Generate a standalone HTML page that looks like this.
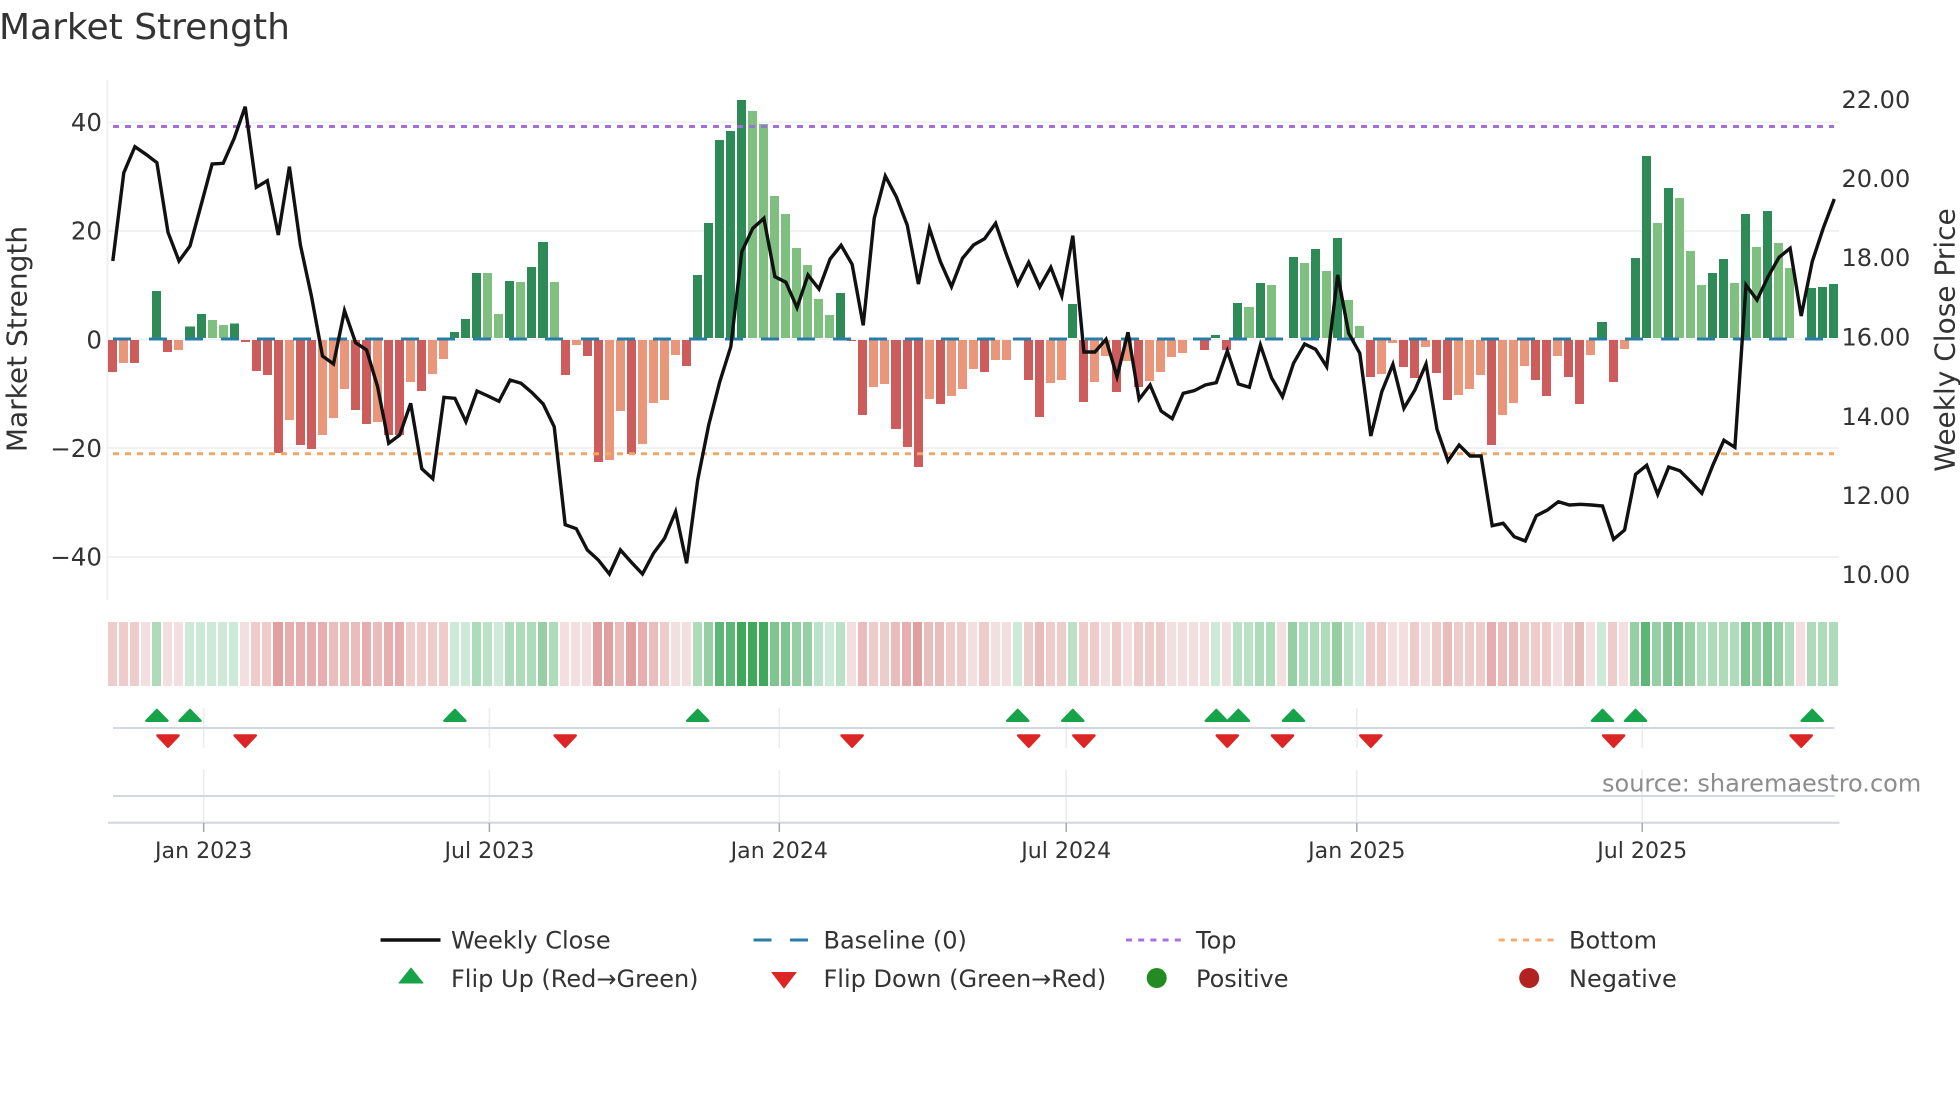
<!DOCTYPE html>
<html lang="en"><head><meta charset="utf-8"><title>Market Strength</title>
<style>
html,body{margin:0;padding:0;background:#fff;width:1960px;height:1102px;overflow:hidden}
svg{position:absolute;left:0;top:0}
text{font-family:"DejaVu Sans","Liberation Sans",sans-serif;fill:#333}
.row{position:absolute;left:107.28px;display:flex;width:1733px}
.row b{display:block;flex:0 0 11.035px;box-sizing:border-box;border-style:solid;border-color:transparent;background-clip:padding-box}
#bars{top:339px;align-items:flex-start}
#bars b{border-width:1px 1.32px 0}
#bars b.a,#bars b.c{border-width:0 1.32px .6px;transform:translateY(-100%)}
.a{background-color:#2e8b57}.c{background-color:#7fbf7f}.d{background-color:#cd5c5c}.e{background-color:#e9967a}
#strip{top:622px;left:107px;height:64px;align-items:stretch}
#strip b{border-width:0 .95px}
.r1{background-color:#f4dfe0}.r2{background-color:#eecccc}.r3{background-color:#eabdbd}.r4{background-color:#e6aeae}.r5{background-color:#e1a0a0}
.g1{background-color:#cde9d7}.g2{background-color:#bbe1c6}.g3{background-color:#aedbb9}.g4{background-color:#97cfa5}.g5{background-color:#7fc592}.g6{background-color:#5eb676}.g7{background-color:#3fa85b}
</style></head><body>
<svg width="1960" height="1102" viewBox="0 0 1960 1102">
<g stroke="#eff1f4" stroke-width="2" fill="none">
<path d="M107.5 80V600"/>
<path d="M108 122.5H1839M108 231H1839M108 339.5H1839M108 448H1839M108 557H1839"/>
</g>
<g stroke="#e9ecf2" stroke-width="1.5" fill="none">
<path d="M203.7 708V748M203.7 770V822M489.4 708V748M489.4 770V822M779.3 708V748M779.3 770V822M1066.2 708V748M1066.2 770V822M1356.8 708V748M1356.8 770V822M1642.2 708V748M1642.2 770V822"/>
</g>
<g stroke="#d2d6dd" stroke-width="2" fill="none">
<path d="M113 728H1834.5M113 796H1834.5M108 822.7H1839.5"/>
</g>
<g stroke="#a3a8b0" stroke-width="1.5" fill="none">
<path d="M203.7 823V832M489.4 823V832M779.3 823V832M1066.2 823V832M1356.8 823V832M1642.2 823V832"/>
</g>
</svg>

<div class="row" id="bars"><b class="d" style="height:33px"></b><b class="e" style="height:24px"></b><b class="d" style="height:24px"></b><b></b><b class="a" style="height:48px"></b><b class="d" style="height:13px"></b><b class="e" style="height:11px"></b><b class="a" style="height:12.5px"></b><b class="a" style="height:25px"></b><b class="c" style="height:19px"></b><b class="c" style="height:14px"></b><b class="a" style="height:15.5px"></b><b class="d" style="height:2.5px"></b><b class="d" style="height:32px"></b><b class="d" style="height:36px"></b><b class="d" style="height:114px"></b><b class="e" style="height:81px"></b><b class="d" style="height:106px"></b><b class="d" style="height:110px"></b><b class="e" style="height:96px"></b><b class="e" style="height:79px"></b><b class="e" style="height:50px"></b><b class="d" style="height:71px"></b><b class="d" style="height:85px"></b><b class="e" style="height:83px"></b><b class="d" style="height:96px"></b><b class="d" style="height:96px"></b><b class="e" style="height:43px"></b><b class="d" style="height:52px"></b><b class="e" style="height:35px"></b><b class="e" style="height:20px"></b><b class="a" style="height:7px"></b><b class="a" style="height:20px"></b><b class="a" style="height:66px"></b><b class="c" style="height:66px"></b><b class="c" style="height:25px"></b><b class="a" style="height:58px"></b><b class="c" style="height:57px"></b><b class="a" style="height:72px"></b><b class="a" style="height:97px"></b><b class="c" style="height:57px"></b><b class="d" style="height:36px"></b><b class="e" style="height:6px"></b><b class="d" style="height:17px"></b><b class="d" style="height:123px"></b><b class="e" style="height:121px"></b><b class="e" style="height:72px"></b><b class="d" style="height:115px"></b><b class="e" style="height:105px"></b><b class="e" style="height:64px"></b><b class="e" style="height:61px"></b><b class="e" style="height:16px"></b><b class="d" style="height:27px"></b><b class="a" style="height:64px"></b><b class="a" style="height:116px"></b><b class="a" style="height:199px"></b><b class="a" style="height:208px"></b><b class="a" style="height:239px"></b><b class="c" style="height:228px"></b><b class="c" style="height:215px"></b><b class="c" style="height:143px"></b><b class="c" style="height:125px"></b><b class="c" style="height:91px"></b><b class="c" style="height:74px"></b><b class="c" style="height:40px"></b><b class="c" style="height:24px"></b><b class="a" style="height:46px"></b><b class="d" style="height:1.5px"></b><b class="d" style="height:76px"></b><b class="e" style="height:48px"></b><b class="e" style="height:45px"></b><b class="d" style="height:90px"></b><b class="d" style="height:108px"></b><b class="d" style="height:128px"></b><b class="e" style="height:60px"></b><b class="d" style="height:65px"></b><b class="e" style="height:57px"></b><b class="e" style="height:50px"></b><b class="e" style="height:30px"></b><b class="d" style="height:33px"></b><b class="e" style="height:21px"></b><b class="e" style="height:21px"></b><b></b><b class="d" style="height:41px"></b><b class="d" style="height:78px"></b><b class="e" style="height:44px"></b><b class="e" style="height:41px"></b><b class="a" style="height:35px"></b><b class="d" style="height:63px"></b><b class="e" style="height:43px"></b><b class="e" style="height:17px"></b><b class="d" style="height:53px"></b><b class="e" style="height:22px"></b><b class="d" style="height:48px"></b><b class="e" style="height:42px"></b><b class="e" style="height:33px"></b><b class="e" style="height:18px"></b><b class="e" style="height:14px"></b><b></b><b class="d" style="height:11px"></b><b class="a" style="height:4px"></b><b class="d" style="height:11px"></b><b class="a" style="height:36px"></b><b class="c" style="height:32px"></b><b class="a" style="height:56px"></b><b class="c" style="height:54px"></b><b></b><b class="a" style="height:82px"></b><b class="c" style="height:76px"></b><b class="a" style="height:90px"></b><b class="c" style="height:68px"></b><b class="a" style="height:101px"></b><b class="c" style="height:39px"></b><b class="c" style="height:13px"></b><b class="d" style="height:38px"></b><b class="e" style="height:35px"></b><b class="e" style="height:4px"></b><b class="d" style="height:28px"></b><b class="d" style="height:39px"></b><b class="e" style="height:8px"></b><b class="d" style="height:34px"></b><b class="d" style="height:61px"></b><b class="e" style="height:56px"></b><b class="e" style="height:50px"></b><b class="e" style="height:36px"></b><b class="d" style="height:106px"></b><b class="e" style="height:76px"></b><b class="e" style="height:64px"></b><b class="e" style="height:27px"></b><b class="d" style="height:41px"></b><b class="d" style="height:57px"></b><b class="e" style="height:17px"></b><b class="d" style="height:38px"></b><b class="d" style="height:65px"></b><b class="e" style="height:16px"></b><b class="a" style="height:17px"></b><b class="d" style="height:43px"></b><b class="e" style="height:10px"></b><b class="a" style="height:81px"></b><b class="a" style="height:183px"></b><b class="c" style="height:116px"></b><b class="a" style="height:151px"></b><b class="c" style="height:141px"></b><b class="c" style="height:88px"></b><b class="c" style="height:54px"></b><b class="a" style="height:66px"></b><b class="a" style="height:80px"></b><b class="c" style="height:56px"></b><b class="a" style="height:125px"></b><b class="c" style="height:92px"></b><b class="a" style="height:128px"></b><b class="c" style="height:96px"></b><b class="c" style="height:71px"></b><b></b><b class="a" style="height:51px"></b><b class="a" style="height:52px"></b><b class="a" style="height:55px"></b></div>

<div class="row" id="strip"><b class="r2"></b><b class="r2"></b><b class="r2"></b><b class="r1"></b><b class="g3"></b><b class="r1"></b><b class="r1"></b><b class="g1"></b><b class="g1"></b><b class="g1"></b><b class="g1"></b><b class="g1"></b><b class="r1"></b><b class="r2"></b><b class="r2"></b><b class="r5"></b><b class="r4"></b><b class="r4"></b><b class="r4"></b><b class="r4"></b><b class="r3"></b><b class="r3"></b><b class="r3"></b><b class="r4"></b><b class="r3"></b><b class="r4"></b><b class="r4"></b><b class="r2"></b><b class="r2"></b><b class="r2"></b><b class="r2"></b><b class="g1"></b><b class="g1"></b><b class="g3"></b><b class="g2"></b><b class="g1"></b><b class="g3"></b><b class="g3"></b><b class="g3"></b><b class="g4"></b><b class="g3"></b><b class="r1"></b><b class="r1"></b><b class="r1"></b><b class="r5"></b><b class="r5"></b><b class="r3"></b><b class="r5"></b><b class="r4"></b><b class="r3"></b><b class="r2"></b><b class="r1"></b><b class="r1"></b><b class="g3"></b><b class="g4"></b><b class="g6"></b><b class="g6"></b><b class="g7"></b><b class="g7"></b><b class="g7"></b><b class="g5"></b><b class="g5"></b><b class="g4"></b><b class="g4"></b><b class="g2"></b><b class="g1"></b><b class="g2"></b><b class="r1"></b><b class="r3"></b><b class="r2"></b><b class="r2"></b><b class="r3"></b><b class="r4"></b><b class="r5"></b><b class="r3"></b><b class="r3"></b><b class="r2"></b><b class="r2"></b><b class="r1"></b><b class="r2"></b><b class="r1"></b><b class="r1"></b><b class="g1"></b><b class="r2"></b><b class="r3"></b><b class="r2"></b><b class="r2"></b><b class="g2"></b><b class="r2"></b><b class="r2"></b><b class="r1"></b><b class="r2"></b><b class="r1"></b><b class="r2"></b><b class="r2"></b><b class="r2"></b><b class="r1"></b><b class="r1"></b><b class="r1"></b><b class="r1"></b><b class="g1"></b><b class="r1"></b><b class="g2"></b><b class="g2"></b><b class="g3"></b><b class="g3"></b><b class="r1"></b><b class="g4"></b><b class="g3"></b><b class="g3"></b><b class="g3"></b><b class="g4"></b><b class="g2"></b><b class="g1"></b><b class="r2"></b><b class="r2"></b><b class="r1"></b><b class="r1"></b><b class="r2"></b><b class="r1"></b><b class="r2"></b><b class="r3"></b><b class="r2"></b><b class="r2"></b><b class="r2"></b><b class="r4"></b><b class="r3"></b><b class="r3"></b><b class="r2"></b><b class="r2"></b><b class="r2"></b><b class="r1"></b><b class="r2"></b><b class="r3"></b><b class="r1"></b><b class="g1"></b><b class="r2"></b><b class="r1"></b><b class="g4"></b><b class="g6"></b><b class="g4"></b><b class="g5"></b><b class="g5"></b><b class="g4"></b><b class="g3"></b><b class="g3"></b><b class="g3"></b><b class="g3"></b><b class="g5"></b><b class="g4"></b><b class="g5"></b><b class="g4"></b><b class="g3"></b><b class="r1"></b><b class="g3"></b><b class="g3"></b><b class="g3"></b></div>

<svg width="1960" height="1102" viewBox="0 0 1960 1102">
<path d="M113 339H1834" stroke="#2a7ca8" stroke-width="3" stroke-dasharray="18 18" fill="none"/>
<path d="M113 126.5H1834" stroke="#a06fd8" stroke-width="3" stroke-dasharray="6 6" fill="none"/>
<path d="M113 453.7H1834" stroke="#f4a765" stroke-width="3" stroke-dasharray="6 6" fill="none"/>
<polyline fill="none" stroke="#111" stroke-width="3.4" stroke-linejoin="miter" points="112.8,261 123.8,172.7 134.9,146.7 145.9,154.3 156.9,162.7 168,232.3 179,261 190,246 201.1,205 212.1,164 223.2,163.3 234.2,138.3 245.2,106.7 256.3,187.3 267.3,180.7 278.3,235 289.4,166.7 300.4,245 311.4,296 322.5,356 333.5,364 344.5,310.7 355.6,342.7 366.6,350 377.6,386.7 388.7,443.3 399.7,435 410.7,403.3 421.8,468.7 432.8,478.7 443.9,397.3 454.9,398.3 465.9,421.7 477,391 488,396 499,401.3 510.1,380 521.1,383.3 532.1,392.7 543.2,404 554.2,426.7 565.2,524.7 576.3,528.7 587.3,550 598.3,560 609.4,574 620.4,550 631.4,562.3 642.5,574 653.5,553.3 664.6,538.3 675.6,511.7 686.6,563.3 697.7,480 708.7,425 719.7,382 730.8,346.7 741.8,251.7 752.8,228.3 763.9,218.3 774.9,276.7 785.9,282.3 797,307.7 808,275 819,289 830.1,259 841.1,245.3 852.1,264.3 863.2,325.3 874.2,218.3 885.3,176 896.3,196.7 907.3,225.3 918.4,284 929.4,228.3 940.4,261.7 951.5,286.7 962.5,258.3 973.5,245 984.6,238.7 995.6,223.3 1006.6,255 1017.7,284.3 1028.7,262.3 1039.7,287 1050.8,267.3 1061.8,296 1072.8,235.7 1083.9,352 1094.9,352 1106,339.3 1117,376.7 1128,332.3 1139.1,399.3 1150.1,385 1161.1,411 1172.2,418.7 1183.2,393.3 1194.2,390.7 1205.3,385 1216.3,382.7 1227.3,351 1238.4,384 1249.4,387.3 1260.4,345 1271.5,377.7 1282.5,396.7 1293.5,363.3 1304.6,344 1315.6,349.3 1326.7,366.7 1337.7,275 1348.7,333.3 1359.8,353.3 1370.8,436 1381.8,391.7 1392.9,364.3 1403.9,408.3 1414.9,390 1426,364 1437,429.3 1448,461 1459.1,445 1470.1,456 1481.1,456 1492.2,525.7 1503.2,523.3 1514.2,536.7 1525.3,541 1536.3,515.7 1547.4,510 1558.4,501.7 1569.4,505 1580.5,504.3 1591.5,505 1602.5,506 1613.6,539.3 1624.6,530 1635.6,474.3 1646.7,465.3 1657.7,494.3 1668.7,467 1679.8,470.7 1690.8,481.7 1701.8,493.3 1712.9,465 1723.9,440.3 1734.9,447.3 1746,285 1757,300 1768.1,276.7 1779.1,257.3 1790.1,248.3 1801.2,316 1812.2,261.7 1823.2,228.3 1834.3,199"/>

<g fill="#16a34a" stroke="#16a34a" stroke-width="2.4" stroke-linejoin="round">
<path transform="translate(156.9 720.8)" d="M-10.6 0L0-10.9 10.6 0z"/>
<path transform="translate(190 720.8)" d="M-10.6 0L0-10.9 10.6 0z"/>
<path transform="translate(454.9 720.8)" d="M-10.6 0L0-10.9 10.6 0z"/>
<path transform="translate(697.7 720.8)" d="M-10.6 0L0-10.9 10.6 0z"/>
<path transform="translate(1017.7 720.8)" d="M-10.6 0L0-10.9 10.6 0z"/>
<path transform="translate(1072.8 720.8)" d="M-10.6 0L0-10.9 10.6 0z"/>
<path transform="translate(1216.3 720.8)" d="M-10.6 0L0-10.9 10.6 0z"/>
<path transform="translate(1238.4 720.8)" d="M-10.6 0L0-10.9 10.6 0z"/>
<path transform="translate(1293.5 720.8)" d="M-10.6 0L0-10.9 10.6 0z"/>
<path transform="translate(1602.5 720.8)" d="M-10.6 0L0-10.9 10.6 0z"/>
<path transform="translate(1635.6 720.8)" d="M-10.6 0L0-10.9 10.6 0z"/>
<path transform="translate(1812.2 720.8)" d="M-10.6 0L0-10.9 10.6 0z"/>
</g>
<g fill="#dc2626" stroke="#dc2626" stroke-width="2.4" stroke-linejoin="round">
<path transform="translate(168 735.5)" d="M-10.6 0L0 11.3 10.6 0z"/>
<path transform="translate(245.2 735.5)" d="M-10.6 0L0 11.3 10.6 0z"/>
<path transform="translate(565.2 735.5)" d="M-10.6 0L0 11.3 10.6 0z"/>
<path transform="translate(852.1 735.5)" d="M-10.6 0L0 11.3 10.6 0z"/>
<path transform="translate(1028.7 735.5)" d="M-10.6 0L0 11.3 10.6 0z"/>
<path transform="translate(1083.9 735.5)" d="M-10.6 0L0 11.3 10.6 0z"/>
<path transform="translate(1227.3 735.5)" d="M-10.6 0L0 11.3 10.6 0z"/>
<path transform="translate(1282.5 735.5)" d="M-10.6 0L0 11.3 10.6 0z"/>
<path transform="translate(1370.8 735.5)" d="M-10.6 0L0 11.3 10.6 0z"/>
<path transform="translate(1613.6 735.5)" d="M-10.6 0L0 11.3 10.6 0z"/>
<path transform="translate(1801.2 735.5)" d="M-10.6 0L0 11.3 10.6 0z"/>
</g>

<text x="-1" y="39" font-size="36">Market Strength</text>

<g font-size="24.5" text-anchor="end">
<text x="102" y="131">40</text>
<text x="102" y="239.5">20</text>
<text x="102" y="348.5">0</text>
<text x="102" y="457">−20</text>
<text x="102" y="565.5">−40</text>
</g>
<g font-size="24">
<text x="1841.5" y="108">22.00</text>
<text x="1841.5" y="187">20.00</text>
<text x="1841.5" y="266">18.00</text>
<text x="1841.5" y="345.5">16.00</text>
<text x="1841.5" y="425">14.00</text>
<text x="1841.5" y="504">12.00</text>
<text x="1841.5" y="583">10.00</text>
</g>
<text transform="translate(26.5 339) rotate(-90)" font-size="28" text-anchor="middle">Market Strength</text>
<text transform="translate(1954.5 340) rotate(-90)" font-size="28" text-anchor="middle">Weekly Close Price</text>

<g font-size="22.1" text-anchor="middle">
<text x="203.7" y="858">Jan 2023</text>
<text x="489.4" y="858">Jul 2023</text>
<text x="779.3" y="858">Jan 2024</text>
<text x="1066.2" y="858">Jul 2024</text>
<text x="1356.8" y="858">Jan 2025</text>
<text x="1642.2" y="858">Jul 2025</text>
</g>
<text x="1602" y="791.5" font-size="24" style="fill:#8c8c8c">source: sharemaestro.com</text>

<path d="M380.5 940H440.5" stroke="#111" stroke-width="3.4" fill="none"/>
<path d="M753.5 940H771.5M790 940H808" stroke="#2a7ca8" stroke-width="3" fill="none"/>
<path d="M1126 940H1181" stroke="#a970e0" stroke-width="3" stroke-dasharray="6 6.2" fill="none"/>
<path d="M1498.7 940H1554" stroke="#f4ab70" stroke-width="3" stroke-dasharray="6 6.2" fill="none"/>
<path d="M411 968L423 983H399z" fill="#16a34a" stroke="#16a34a" stroke-linejoin="round"/>
<path d="M772 972.5H796L784 988z" fill="#dc2626" stroke="#dc2626" stroke-linejoin="round"/>
<circle cx="1156.7" cy="978" r="10" fill="#228b22"/>
<circle cx="1529.2" cy="978" r="10" fill="#b22222"/>
<g font-size="24">
<text x="451" y="948.5">Weekly Close</text>
<text x="823.5" y="948.5">Baseline (0)</text>
<text x="1196" y="948.5">Top</text>
<text x="1569" y="948.5">Bottom</text>
<text x="451" y="987">Flip Up (Red→Green)</text>
<text x="823.5" y="987">Flip Down (Green→Red)</text>
<text x="1196" y="987">Positive</text>
<text x="1569" y="987">Negative</text>
</g>
</svg>
</body></html>
